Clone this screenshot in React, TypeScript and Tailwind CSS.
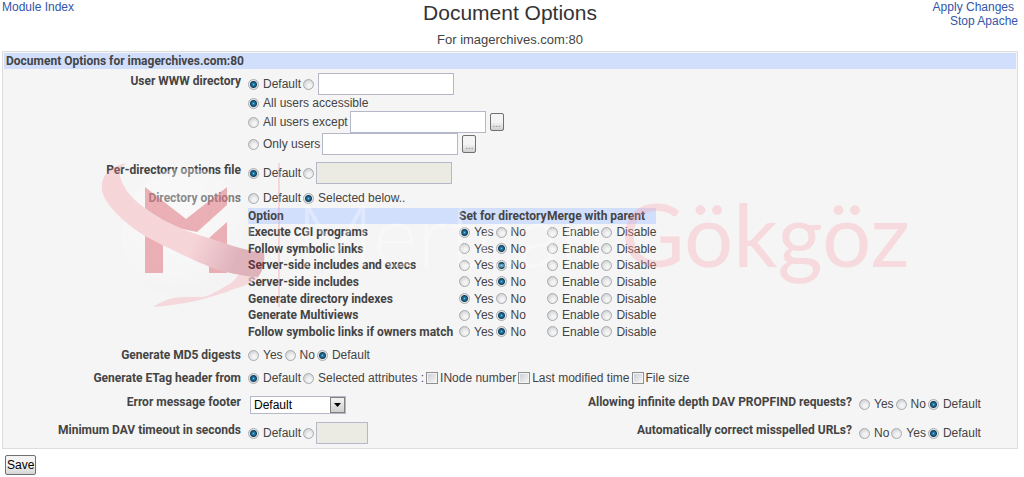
import React, { useId } from "react";

const DOT =
  "size-[11px] shrink-0 appearance-none rounded-full border border-[#a9acae] bg-[radial-gradient(circle_at_60%_65%,#f4f4f4_20%,#cfd1d4_80%)] checked:bg-[radial-gradient(circle_at_50%_50%,#6cc4e8_0,#2583b5_1px,#153f58_3px,#e4e6e8_4px)]";
const FIELD = "h-[22px] border border-[#b5b8c8] bg-white px-1 disabled:bg-[#ebebe4]";
const BOLD = "font-['Roboto','Liberation_Sans',Arial,sans-serif] font-bold";

function Radio({ name, text, on }: { name: string; text: string; on?: boolean }) {
  return (
    <label className="flex items-center gap-1 whitespace-nowrap">
      <input type="radio" name={name} defaultChecked={on} className={DOT} />
      <span>{text}</span>
    </label>
  );
}

function BareRadio({ name, label }: { name: string; label: string }) {
  return <input type="radio" name={name} aria-label={label} className={DOT} />;
}

function Check({ text }: { text: string }) {
  return (
    <label className="flex items-center gap-0.5 whitespace-nowrap">
      <input
        type="checkbox"
        className="size-3 shrink-0 appearance-none border border-[#8e8f8f] bg-linear-to-br from-[#c9ccd2] to-[#f8f8f8] shadow-[inset_0_0_0_1px_#f4f4f4] checked:bg-[#1f78a8]"
      />
      <span>{text}</span>
    </label>
  );
}

function Choices({ options, value }: { options: string[]; value?: string }) {
  const name = useId();
  return (
    <div className="flex items-center gap-0.5">
      {options.map((o) => (
        <Radio key={o} name={name} text={o} on={o === value} />
      ))}
    </div>
  );
}

function Browse({ label }: { label: string }) {
  return (
    <button
      type="button"
      aria-label={label}
      className="ml-0.5 flex h-[18px] w-[14px] items-end justify-center rounded-xs border border-[#707070] bg-linear-to-b from-[#f4f4f4] from-50% to-[#cfcfcf] text-[10px] leading-3 text-[#888]"
    >
      ...
    </button>
  );
}

function Title({ children }: { children: React.ReactNode }) {
  return <div className={`${BOLD} text-right leading-4`}>{children}</div>;
}

const ROW = "grid grid-cols-[237px_minmax(0,1fr)] gap-x-[7px]";
const WIDE_ROW = "grid grid-cols-[237px_minmax(0,1fr)_auto_157px] gap-x-[7px]";

const OPTIONS: [string, string][] = [
  ["Execute CGI programs", "Yes"],
  ["Follow symbolic links", "No"],
  ["Server-side includes and execs", "No"],
  ["Server-side includes", "No"],
  ["Generate directory indexes", "Yes"],
  ["Generate Multiviews", "No"],
  ["Follow symbolic links if owners match", "No"],
];

const RIBBON =
  "M26 8 C8 12 0 22 2 36 C5 50 26 70 47 82 C66 92 98 108 116 114 C132 119 148 122 158 122 C164 115 165 104 164 98 C142 95 118 86 93 78 C68 69 54 60 45 53 C30 43 20 28 20 19 C21 14 23 11 26 8 Z";

function Watermark() {
  return (
    <svg
      aria-hidden="true"
      viewBox="0 0 820 160"
      className="pointer-events-none absolute top-[155px] left-[100px] h-[160px] w-[820px]"
    >
      <defs>
        <radialGradient id="globe" cx="40%" cy="35%" r="65%">
          <stop offset="0" stopColor="#fff" stopOpacity="0.4" />
          <stop offset="0.7" stopColor="#fafafa" stopOpacity="0.35" />
          <stop offset="1" stopColor="#eeeeee" stopOpacity="0.2" />
        </radialGradient>
        <linearGradient id="ribbon" x1="0" x2="1" y1="0" y2="0.3">
          <stop offset="0.7" stopColor="#fa8d98" />
          <stop offset="1" stopColor="#ad1934" />
        </linearGradient>
        <mask id="behind">
          <rect width="820" height="160" fill="#fff" />
          <path d={RIBBON} fill="#000" />
        </mask>
      </defs>
      <g mask="url(#behind)">
        <circle cx="86" cy="78" r="65" fill="url(#globe)" />
        <path
          d="M45 32 L86 64 L127 32 V50 L97 77 L63 70 V118 H45 Z M127 67 V118 H109 V83 Z"
          fill="#dd6873"
          fillOpacity="0.5"
        />
        <path
          d="M138 120 L159 122 C150 129 142 132 134 134 C112 143 84 150 53 152 C62 146 72 142 84 142 H103 C110 140 118 136 124 132 C132 128 136 124 138 120 Z"
          fill="#f5ccd1"
          fillOpacity="0.7"
        />
      </g>
      <path d={RIBBON} fill="url(#ribbon)" fillOpacity="0.3" />
      <path d="M179 8 V152" stroke="#f98d98" strokeOpacity="0.3" strokeWidth="2" />
      <text x="196" y="112" fontSize="86" fill="#fff" fillOpacity="0.3" className="font-['Lato',sans-serif] font-light">
        Mertcan
      </text>
      <text x="521" y="112" fontSize="87" fill="#fb9ba6" fillOpacity="0.3" className="font-['Lato',sans-serif] font-normal">
        Gökgöz
      </text>
    </svg>
  );
}

export default function App() {
  return (
    <main className="relative bg-white pr-1.5 pl-0.5 font-['Liberation_Sans',Arial,sans-serif] text-xs leading-4 text-[#444]">
      <header className="grid h-[51px] grid-cols-[1fr_auto_1fr]">
        <nav className="leading-[14px]">
          <a href="#index" className="text-[#3355aa]">Module Index</a>
        </nav>
        <div className="text-center">
          <h1 className="text-[21px] leading-[26px] text-[#333]">Document Options</h1>
          <p className="mt-1.5 text-[13px] leading-4">For imagerchives.com:80</p>
        </div>
        <nav className="flex flex-col items-end leading-[14px] text-[#3355aa]">
          <a href="#apply" className="pr-1">Apply Changes</a>
          <a href="#stop">Stop Apache</a>
        </nav>
      </header>

      <form>
        <section className="border border-[#dddddd] bg-[#f5f5f5] p-px pb-1">
          <h2 className={`${BOLD} bg-[#d1dffd] px-0.5 leading-4`}>Document Options for imagerchives.com:80</h2>

          <div className={`${ROW} pt-1`}>
            <Title>User WWW directory</Title>
            <div>
              <div className="flex items-center gap-0.5">
                <Radio name="www" text="Default" on />
                <BareRadio name="www" label="Directory" />
                <input aria-label="User WWW directory" className={`${FIELD} ml-0.5 w-[136px]`} />
              </div>
              <div className="flex h-4 items-center"><Radio name="users" text="All users accessible" on /></div>
              <div className="flex items-center gap-0.5">
                <Radio name="users" text="All users except" />
                <input aria-label="Excluded users" className={`${FIELD} w-[136px]`} />
                <Browse label="Choose excluded users" />
              </div>
              <div className="flex items-center gap-0.5">
                <Radio name="users" text="Only users" />
                <input aria-label="Allowed users" className={`${FIELD} w-[136px]`} />
                <Browse label="Choose allowed users" />
              </div>
            </div>
          </div>

          <div className={`${ROW} pt-[7px]`}>
            <Title>Per-directory options file</Title>
            <div className="flex items-center gap-0.5">
              <Radio name="perdir" text="Default" on />
              <BareRadio name="perdir" label="File name" />
              <input aria-label="Per-directory options file" disabled className={`${FIELD} w-[136px]`} />
            </div>
          </div>

          <div className={`${ROW} pt-1.5`}>
            <Title>Directory options</Title>
            <div>
              <Choices options={["Default", "Selected below.."]} value="Selected below.." />
              <table className="mt-0.5 h-[132px] table-fixed leading-4">
                <thead className={`${BOLD} bg-[#d1dffd] text-left`}>
                  <tr>
                    <th className="w-[211px] p-0">Option</th>
                    <th className="w-[88px] p-0 whitespace-nowrap">Set for directory</th>
                    <th className="w-[106px] p-0 whitespace-nowrap">Merge with parent</th>
                  </tr>
                </thead>
                <tbody>
                  {OPTIONS.map(([name, value]) => (
                    <tr key={name}>
                      <th scope="row" className={`${BOLD} p-0 text-left whitespace-nowrap`}>{name}</th>
                      <td className="p-0"><Choices options={["Yes", "No"]} value={value} /></td>
                      <td className="p-0"><Choices options={["Enable", "Disable"]} /></td>
                    </tr>
                  ))}
                </tbody>
              </table>
            </div>
          </div>

          <div className={`${ROW} pt-[7px]`}>
            <Title>Generate MD5 digests</Title>
            <Choices options={["Yes", "No", "Default"]} value="Default" />
          </div>

          <div className={`${ROW} pt-[7px]`}>
            <Title>Generate ETag header from</Title>
            <div className="flex items-center gap-0.5">
              <Choices options={["Default", "Selected attributes :"]} value="Default" />
              <Check text="INode number" />
              <Check text="Last modified time" />
              <Check text="File size" />
            </div>
          </div>

          <div className={`${WIDE_ROW} pt-2`}>
            <Title><label htmlFor="footer">Error message footer</label></Title>
            <div className="relative mt-0.5 ml-0.5 h-[18px] w-24">
              <select id="footer" className="h-[18px] w-24 appearance-none border border-[#b5b8c8] bg-white px-[3px] leading-4 text-black">
                <option>Default</option>
              </select>
              <span className="pointer-events-none absolute top-px right-px flex h-4 w-[15px] items-center justify-center border border-[#808080] bg-linear-to-b from-[#f4f4f4] to-[#cfcfcf]">
                <svg viewBox="0 0 7 4" className="h-1 w-[7px]"><path d="M0 0H7L3.5 4Z" /></svg>
              </span>
            </div>
            <Title>Allowing infinite depth DAV PROPFIND requests?</Title>
            <Choices options={["Yes", "No", "Default"]} value="Default" />
          </div>

          <div className={`${WIDE_ROW} pt-2`}>
            <Title>Minimum DAV timeout in seconds</Title>
            <div className="flex items-center gap-0.5">
              <Radio name="timeout" text="Default" on />
              <BareRadio name="timeout" label="Seconds" />
              <input aria-label="Minimum DAV timeout in seconds" disabled className={`${FIELD} w-[52px]`} />
            </div>
            <Title>Automatically correct misspelled URLs?</Title>
            <Choices options={["No", "Yes", "Default"]} value="Default" />
          </div>
        </section>

        <button
          type="submit"
          className="mt-1.5 ml-[3px] h-5 rounded-xs border border-[#707070] bg-linear-to-b from-[#f4f4f4] from-50% to-[#d4d4d4] px-px text-xs text-black"
        >
          Save
        </button>
      </form>
      <Watermark />
    </main>
  );
}
